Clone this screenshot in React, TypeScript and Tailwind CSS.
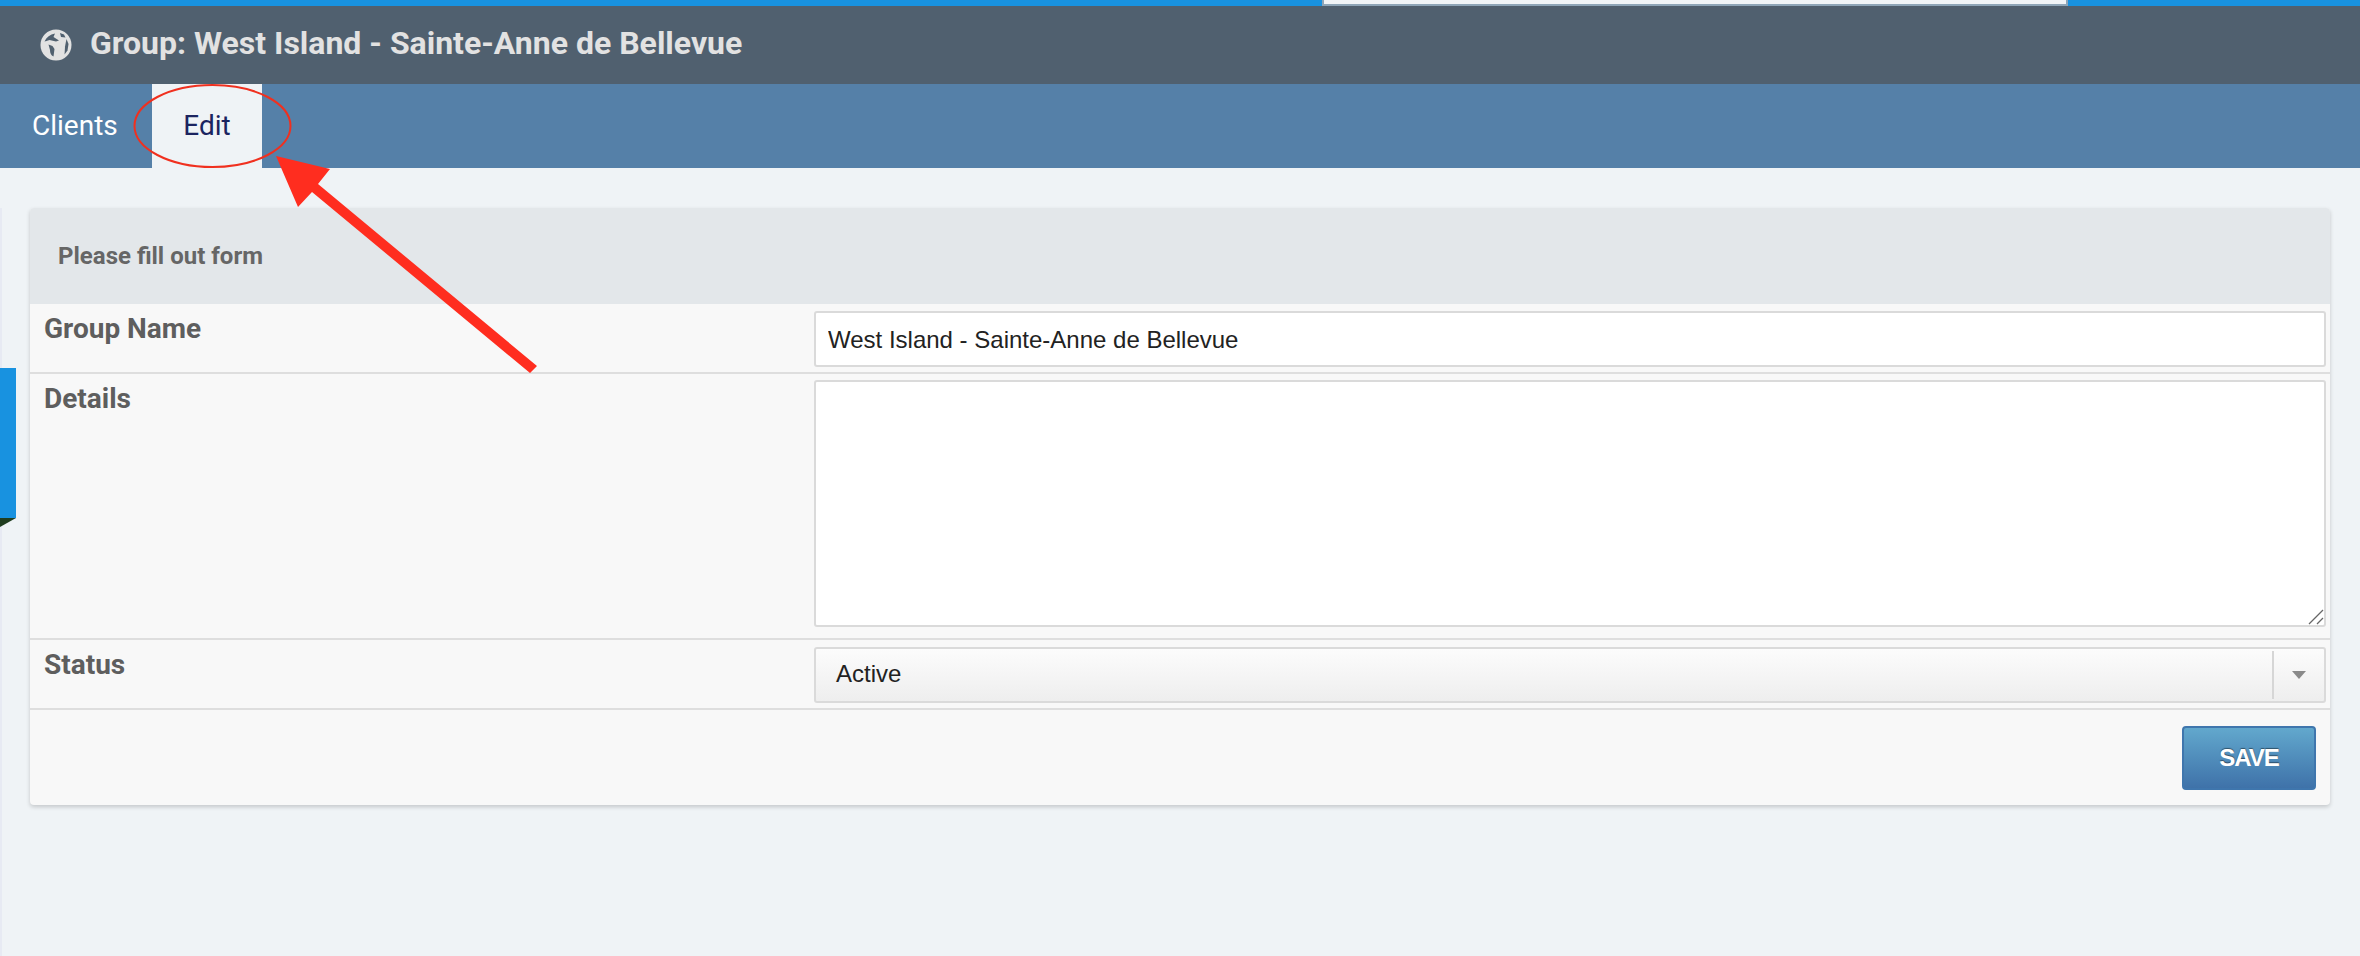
const sans = { fontFamily: '"Liberation Sans", Arial, sans-serif' };

function Row({ label, inner, children }: { label: string; inner: string; children: React.ReactNode }) {
  return (
    <div className="flex border-b-2 border-[#dedede]">
      <div className="w-[784px] pl-[14px] pt-[6px] text-[28px] leading-[37px] font-bold text-[#5e5e5e]">{label}</div>
      <div className={inner}>{children}</div>
    </div>
  );
}

function Globe() {
  return (
    <svg viewBox="0 0 32 32" className="h-[32px] w-[32px]">
      <circle cx="16" cy="16" r="15.5" fill="#e2e2e2" />
      <g fill="#50606f">
        <path d="M4.500 12.500C6.500 8 10 5.500 15 4.500L13.500 8l5.500 3.500-3 1-6.500-1.500-3 1z" />
        <path d="M8.500 15.500l4 1.500 2 3-1 7.500c-2.500-1-3.500-3.500-3.500-6.500z" />
        <path d="M20 4l4 1.500 1.500 3-4.500-.5z" />
        <path d="M26.500 10l2 5-1 6.500-3 4 .5-8z" />
      </g>
    </svg>
  );
}

export default function App() {
  return (
    <div className="relative min-h-screen overflow-hidden bg-[#eff3f6]" style={{ fontFamily: "Roboto, sans-serif" }}>
      <div className="flex h-[6px] bg-[#1892e0]">
        <div className="ml-[1322px] h-[6px] w-[746px] border-x-2 border-b-2 border-[#8fa6b8] bg-[#f1f5f8]" />
      </div>

      <header className="flex h-[78px] items-center bg-[#50606f] pl-[40px]">
        <Globe />
        <h1 className="mb-[4px] ml-[18px] text-[32px] font-bold text-[#e2e2e2]">Group: West Island - Sainte-Anne de Bellevue</h1>
      </header>

      <nav className="flex h-[84px] bg-[#5580a8] text-[28px]">
        <a className="flex w-[152px] items-center pl-[32px] text-white">Clients</a>
        <a className="flex w-[110px] items-center justify-center bg-[#eff3f6] text-[#1b2460]">Edit</a>
      </nav>

      <main className="px-[30px] pt-[40px]">
        <section className="rounded-[4px] bg-[#f8f8f8] shadow-[0_2px_4px_rgba(0,0,0,0.18)]">
          <div className="flex h-[96px] items-center rounded-t-[4px] bg-[#e3e7ea] pl-[28px] text-[24px] font-bold text-[#666666]">
            Please fill out form
          </div>

          <Row label="Group Name" inner="flex-1 pr-[4px] pt-[7px] pb-[5px]">
            <input
              readOnly
              value="West Island - Sainte-Anne de Bellevue"
              className="block h-[56px] w-full rounded-[3px] border-2 border-[#dadada] bg-white px-[12px] pt-[2px] text-[24px] text-[#222222] outline-none"
              style={sans}
            />
          </Row>

          <Row label="Details" inner="flex-1 pr-[4px] pt-[6px] pb-[11px]">
            <div className="relative">
              <textarea className="block h-[247px] w-full resize-none rounded-[3px] border-2 border-[#dadada] bg-white outline-none" />
              {/* resize grip */}
              <svg className="pointer-events-none absolute bottom-[2px] right-[2px]" width="16" height="16">
                <path d="M1 15L15 1M9 15L15 9" stroke="#666666" strokeWidth="1.300" fill="none" />
              </svg>
            </div>
          </Row>

          <Row label="Status" inner="flex-1 pr-[4px] pt-[7px] pb-[5px]">
            <div
              className="flex h-[56px] w-full items-stretch rounded-[3px] border-2 border-[#dadada] bg-gradient-to-b from-[#fcfcfc] to-[#eeeeee] text-[24px] text-[#222222]"
              style={sans}
            >
              <span className="flex flex-1 items-center pb-[2px] pl-[20px]">Active</span>
              <span className="my-[2px] flex w-[52px] items-center justify-center border-l-2 border-[#d6d6d6]">
                <span className="h-0 w-0 border-x-[7px] border-t-[8px] border-x-transparent border-t-[#8a8a8a]" />
              </span>
            </div>
          </Row>

          <div className="flex h-[95px] items-start justify-end pr-[14px] pt-[16px]">
            <button
              type="button"
              className="h-[64px] w-[134px] rounded-[4px] border-2 border-[#3f76ad] bg-gradient-to-b from-[#62a8cd] to-[#3f72a9] text-[24px] font-bold tracking-[-1px] text-white"
              style={{ ...sans, textShadow: "0 -1px 1px rgba(0,0,0,0.45)" }}
            >
              SAVE
            </button>
          </div>
        </section>
      </main>

      {/* bit of the page behind the panel */}
      <div className="absolute bottom-0 left-0 top-[208px] w-[2px] bg-[#e7eaf3]" />
      <div className="absolute left-0 top-[368px] h-[150px] w-[16px] bg-[#1892e0]" />
      <div className="absolute left-0 top-[518px] h-0 w-0 border-r-[16px] border-t-[9px] border-r-transparent border-t-[#1f3d1f]" />

      {/* annotation drawn on top of the screenshot */}
      <svg className="pointer-events-none absolute left-0 top-0" width="600" height="400">
        <ellipse cx="212.5" cy="126" rx="78" ry="41" fill="none" stroke="#f0301f" strokeWidth="2" />
        <polygon points="276,156 330,169 318,184 537,366 530,373 312,192 298,207" fill="#ff2d1f" />
      </svg>
    </div>
  );
}
